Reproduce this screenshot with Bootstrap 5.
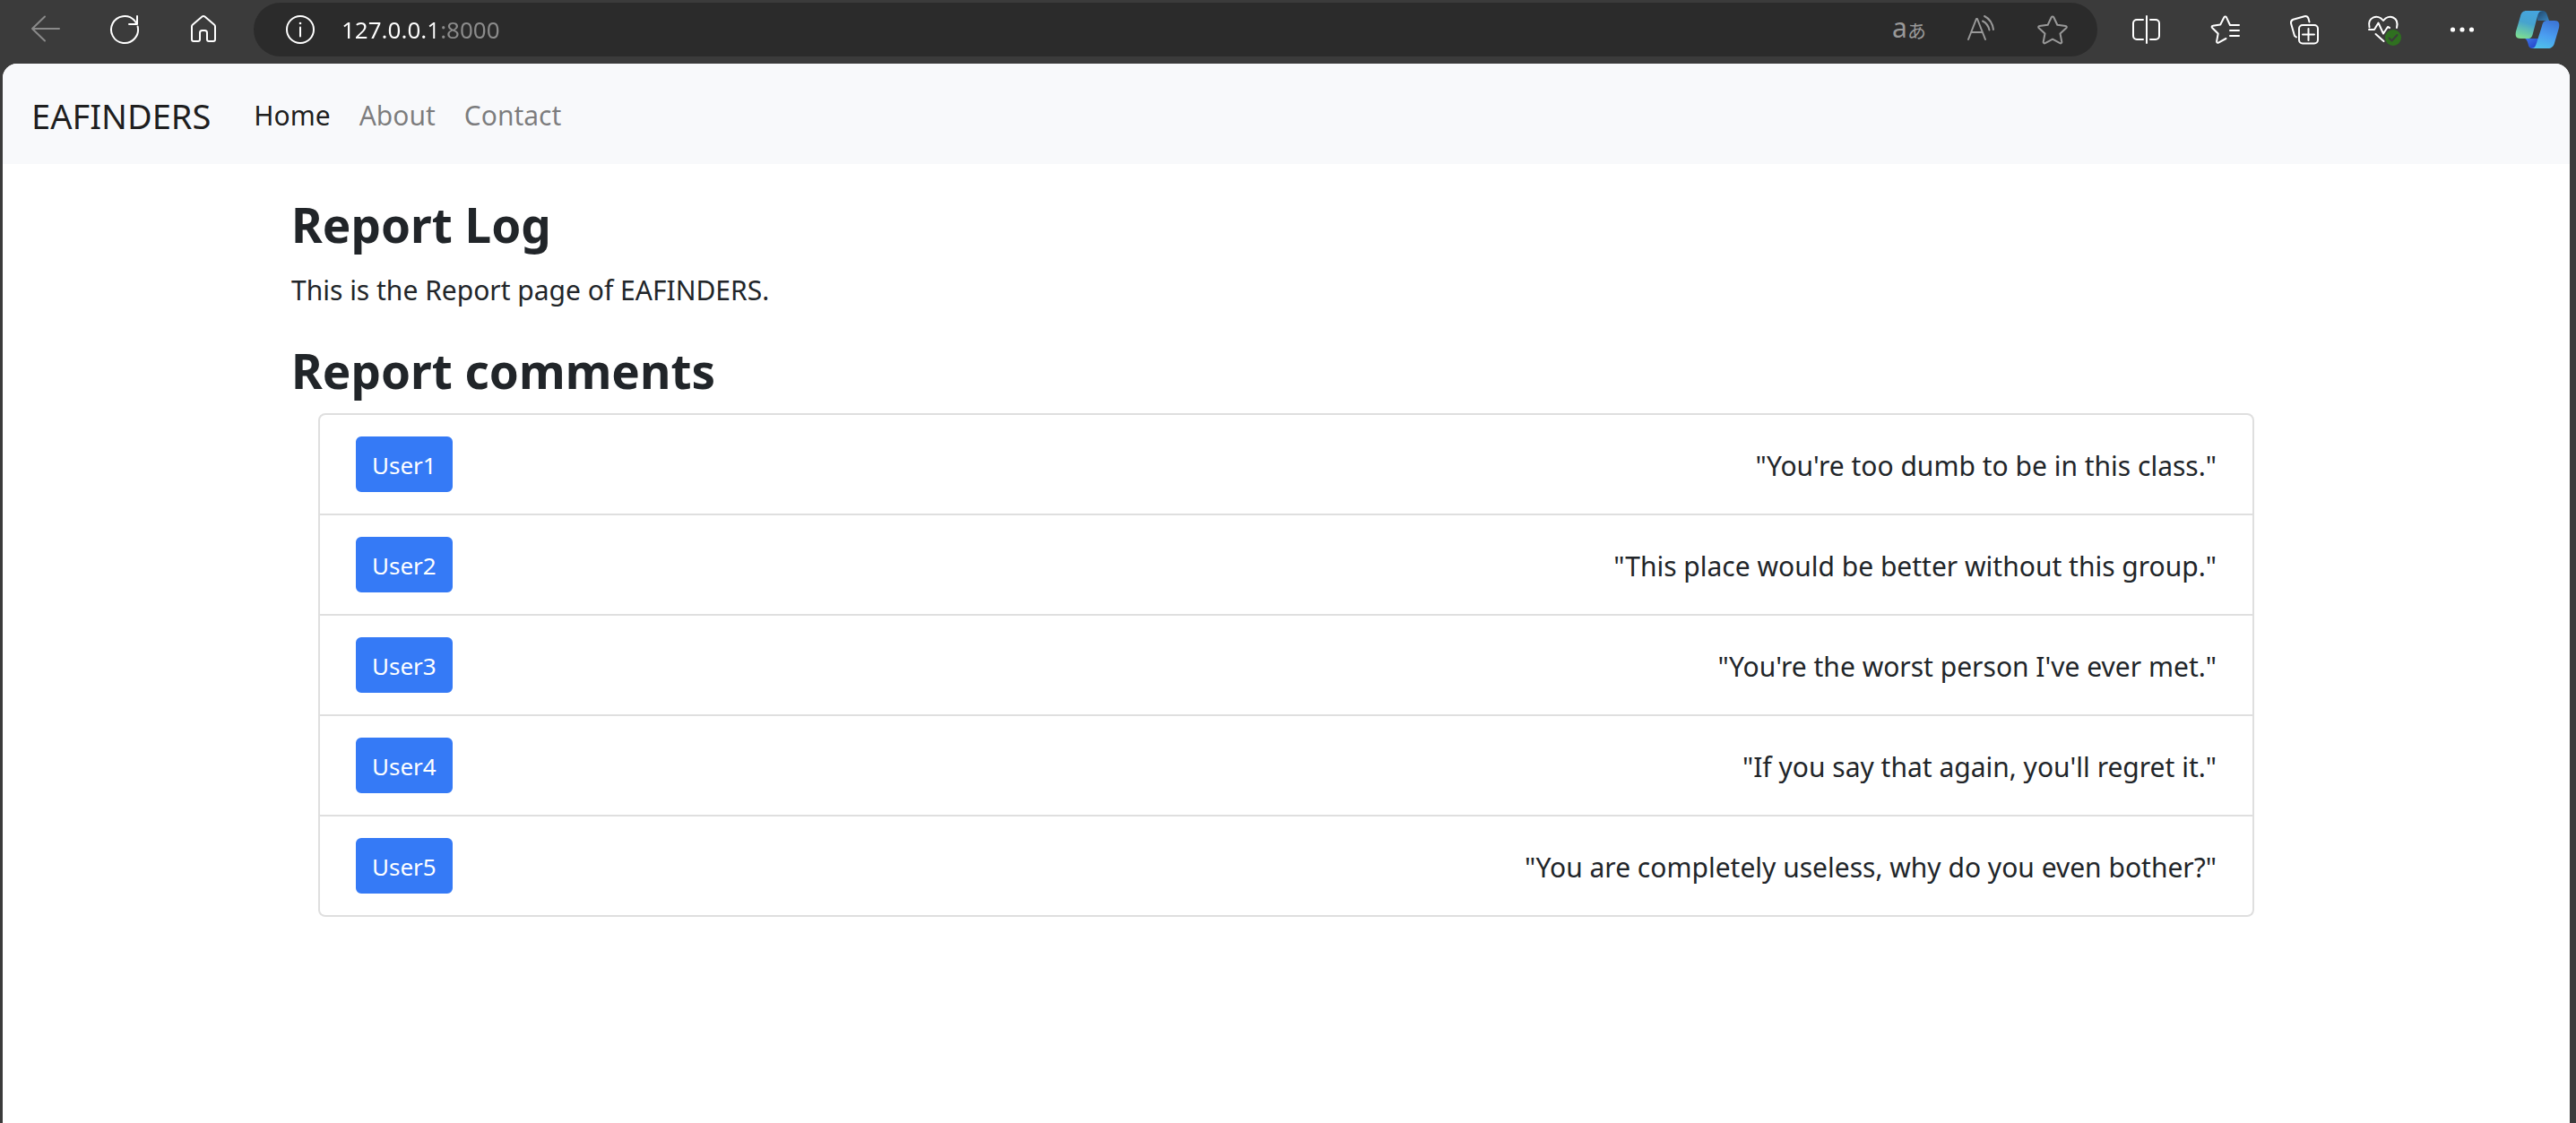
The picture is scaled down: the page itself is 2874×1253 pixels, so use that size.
<!DOCTYPE html>
<html lang="en">
<head>
<meta charset="utf-8">
<meta name="viewport" content="width=device-width, initial-scale=1">
<title>EAFINDERS - Report Log</title>
<link rel="stylesheet" href="https://cdn.jsdelivr.net/npm/bootstrap@5.3.0/dist/css/bootstrap.min.css">
<style>
  html { font-size: 32px; }
  body {
    font-family: "Noto Sans", "Noto Sans CJK JP", sans-serif;
    font-size: 30px;
    line-height: 48px;
    color: #212529;
    background: #3b3b3b;
  }

  /* Browser toolbar */
  .toolbar { height: 71px; padding: 3px 3px 8px 7px; }
  .tool {
    width: 88px; height: 60px; padding: 0; border: 0;
    display: flex; align-items: center; justify-content: center;
    background: transparent; color: #fff;
  }
  .tool svg, .address-tool svg { fill: none; stroke: currentColor; stroke-width: 2; stroke-linecap: round; stroke-linejoin: round; }
  .tool-off { color: #8a8a8a; }
  .tool-copilot { width: 80px; }
  .address {
    height: 60px; margin: 0 11px 0 12px; padding: 0 10px 0 12px;
    border-radius: 30px; background: #2b2b2b; min-width: 0;
  }
  .address-tool {
    width: 80px; height: 60px; padding: 0; border: 0; flex: none;
    display: flex; align-items: center; justify-content: center;
    background: transparent; color: #999;
  }
  .address-info { color: #fff; }
  .address-field {
    min-width: 0; height: 48px; padding: 0 0 0 6px; border: 0; outline: 0;
    font-size: 26px; color: #fff;
    background: linear-gradient(90deg, #fff 110px, #8c8c8c 110px);
    -webkit-background-clip: text; background-clip: text;
    -webkit-text-fill-color: transparent;
  }
  .translate-latin { font-size: 30px; line-height: 32px; padding-bottom: 4px; }
  .translate-kana { font-size: 21px; line-height: 32px; font-family: "Noto Sans CJK JP", sans-serif; }

  /* Web page */
  .page { margin: 0 7px 0 3px; border-radius: 16px 16px 0 0; background: #fff; overflow: hidden; }
  .site-nav { padding: 18px 32px 14px; background: #f8f9fb; }
  .site-nav .navbar-brand { font-size: 38px; line-height: 60px; padding: 10px 0; margin-right: 32px; color: rgba(0,0,0,.9); }
  .site-nav .nav-link { padding: 16px; color: rgba(0,0,0,.5); }
  .site-nav .nav-link.active { color: rgba(0,0,0,.9); }
  .content { max-width: 2280px; padding: 34px 30px 0; }
  .heading { font-size: 53px; line-height: 67px; font-weight: 700; margin-bottom: 16px; }
  .heading-comments { margin-bottom: 14px; }
  .comments { margin: 0 30px; --bs-list-group-border-width: 2px; --bs-list-group-border-color: #dfdfdf; --bs-list-group-border-radius: 8px; }
  .comments .list-group-item { padding: 24px 40px; color: #212529; }
  .comments .list-group-item span { padding-top: 4px; }
  .comments .btn {
    --bs-btn-bg: #357af6; --bs-btn-border-color: #357af6;
    padding: 9px 16px 7px; border-width: 2px; border-radius: 6px;
    font-size: 26px; line-height: 42px;
  }
</style>
</head>
<body class="d-flex flex-column min-vh-100">
<header class="toolbar d-flex align-items-center">
  <button type="button" class="tool tool-off" aria-label="Back" disabled>
    <svg width="36" height="36" viewBox="0 0 36 36"><path d="M33 17H3M17 3.500L3 17l14 13.500"/></svg>
  </button>
  <button type="button" class="tool" aria-label="Refresh">
    <svg width="36" height="36" viewBox="0 0 36 36"><path d="M32.600 14.500A15 15 0 1 1 29 7.800L31.500 11.500M32 3v9H23"/></svg>
  </button>
  <button type="button" class="tool" aria-label="Home">
    <svg width="36" height="36" viewBox="0 0 36 36"><path d="M5 14.500a2.500 2.500 0 0 1 1-2L16.500 3.600a2.300 2.300 0 0 1 3 0L30 12.500a2.500 2.500 0 0 1 1 2V29a2 2 0 0 1-2 2h-5a2 2 0 0 1-2-2v-7.500a2.500 2.500 0 0 0-2.500-2.500h-3a2.500 2.500 0 0 0-2.500 2.500V29a2 2 0 0 1-2 2H7a2 2 0 0 1-2-2z"/></svg>
  </button>

  <div class="address d-flex align-items-center flex-grow-1">
    <button type="button" class="address-tool address-info" aria-label="Site information">
      <svg width="36" height="36" viewBox="0 0 36 36"><circle cx="18" cy="18" r="15"/><path d="M18 15.500v10"/><circle cx="18" cy="11" r="1.300" fill="currentColor" stroke="none"/></svg>
    </button>
    <input class="address-field flex-grow-1" type="text" value="127.0.0.1:8000" aria-label="Address" spellcheck="false">
    <button type="button" class="address-tool" aria-label="Translate"><span class="translate-latin">a</span><span class="translate-kana">あ</span></button>
    <button type="button" class="address-tool" aria-label="Read aloud">
      <svg width="36" height="36" viewBox="0 0 36 36"><path d="M4 29L13 6h1l9 23M7.500 21h12M22 3c5 2.500 9 8 10 15M20 8.500c4 2 6.500 5.500 7.500 10"/></svg>
    </button>
    <button type="button" class="address-tool" aria-label="Add to favorites">
      <svg width="36" height="36" viewBox="0 0 36 36"><path d="M16.700 4.200a1.500 1.500 0 0 1 2.600 0l4 8.500 9.300 1.200a1.300 1.300 0 0 1 .7 2.300l-6.800 6.300 1.800 9.200a1.400 1.400 0 0 1-2 1.500L18 28.700l-8.300 4.500a1.400 1.400 0 0 1-2-1.500l1.800-9.200-6.800-6.300a1.300 1.300 0 0 1 .7-2.300l9.300-1.200z"/></svg>
    </button>
  </div>

  <button type="button" class="tool" aria-label="Split screen">
    <svg width="36" height="36" viewBox="0 0 36 36"><path d="M14 7H7a4 4 0 0 0-4 4v14a4 4 0 0 0 4 4h7M22 7h6a4 4 0 0 1 4 4v14a4 4 0 0 1-4 4h-6M18 3v30"/></svg>
  </button>
  <button type="button" class="tool" aria-label="Favorites">
    <svg width="36" height="36" viewBox="0 0 36 36"><path d="M33 13H23l-4-8.700a1.500 1.500 0 0 0-2.600 0l-4.200 8.200-8.400 1.200a1.300 1.300 0 0 0-.7 2.300l6.600 6.500-1.600 8.600a1.400 1.400 0 0 0 2 1.500L18.500 28M23 19h10M23 25h10"/></svg>
  </button>
  <button type="button" class="tool" aria-label="Collections">
    <svg width="36" height="36" viewBox="0 0 36 36"><rect x="12" y="13" width="21" height="20.500" rx="4"/><path d="M22.500 17v13M16 23.500h13M9 26.500l-2-1.500L3 11a4 4 0 0 1 2.500-4.200L18 3.200a4 4 0 0 1 4.500 2.500L23.500 9.500"/></svg>
  </button>
  <button type="button" class="tool" aria-label="Browser essentials">
    <svg width="40" height="40" viewBox="0 0 40 40"><path d="M4.500 17.500C2 6 14 2 20 10c6-8 18-4 15 8M4 20h6l4.500-7.500 5.500 12 5-7.500 2 1M11.500 25l9 8"/><circle cx="31" cy="29" r="9" fill="#2f7020" stroke="none"/><path d="M26.500 29.500l3 3 6-6.500" stroke="#3b3b3b"/></svg>
  </button>
  <button type="button" class="tool" aria-label="Settings and more">
    <svg width="36" height="36" viewBox="0 0 36 36"><g fill="currentColor" stroke="none"><circle cx="7.500" cy="18" r="2.600"/><circle cx="18" cy="18" r="2.600"/><circle cx="28.500" cy="18" r="2.600"/></g></svg>
  </button>
  <button type="button" class="tool tool-copilot" aria-label="Copilot">
    <svg width="50" height="44" viewBox="0 0 50 44">
      <defs>
        <linearGradient id="cp1" x1="0.600" y1="0" x2="0.300" y2="1"><stop offset="0" stop-color="#45a5df"/><stop offset=".45" stop-color="#46a3cf"/><stop offset="1" stop-color="#7bdc93"/></linearGradient>
        <linearGradient id="cp2" x1="0.600" y1="0" x2="0.300" y2="1"><stop offset="0" stop-color="#3d78d8"/><stop offset=".5" stop-color="#4a9cf0"/><stop offset="1" stop-color="#4fc0ea"/></linearGradient>
        <linearGradient id="cp3" x1="0" y1="0" x2="1" y2="1"><stop offset="0" stop-color="#1f4468"/><stop offset="1" stop-color="#3a84bc"/></linearGradient>
        <linearGradient id="cp4" x1="0" y1="0" x2="1" y2="1"><stop offset="0" stop-color="#3f78e8"/><stop offset="1" stop-color="#1f3bc4"/></linearGradient>
      </defs>
      <g stroke="none">
        <path fill="url(#cp3)" d="M24 1h6c4 0 5 2 6 5l2 6H25z"/>
        <path fill="url(#cp4)" d="M11 32h16l-5 11h-3c-4 0-4-4-5-7-1-2-1-3-3-4z"/>
        <path fill="url(#cp1)" d="M13 1h18c-4 0-5 3-6 6l-5 19c-1 4-2 6-6 6H6c-5 0-6-3-5-8L6 7c1-4 3-6 7-6z"/>
        <path fill="url(#cp2)" d="M36 12h8c5 0 6 3 5 8l-5 17c-1 4-4 6-7 6H18c4 0 5-3 6-6l6-19c1-4 2-6 6-6z"/>
      </g>
    </svg>
  </button>
</header>

<div class="page flex-grow-1">
  <nav class="navbar navbar-expand site-nav">
    <a class="navbar-brand" href="#">EAFINDERS</a>
    <ul class="navbar-nav">
      <li class="nav-item"><a class="nav-link active" aria-current="page" href="#">Home</a></li>
      <li class="nav-item"><a class="nav-link" href="#">About</a></li>
      <li class="nav-item"><a class="nav-link" href="#">Contact</a></li>
    </ul>
  </nav>

  <main class="content container-fluid">
    <h1 class="heading">Report Log</h1>
    <p class="mb-3">This is the Report page of EAFINDERS.</p>
    <h2 class="heading heading-comments">Report comments</h2>
    <ul class="list-group comments">
      <li class="list-group-item d-flex justify-content-between align-items-center"><button type="button" class="btn btn-primary">User1</button><span>"You're too dumb to be in this class."</span></li>
      <li class="list-group-item d-flex justify-content-between align-items-center"><button type="button" class="btn btn-primary">User2</button><span>"This place would be better without this group."</span></li>
      <li class="list-group-item d-flex justify-content-between align-items-center"><button type="button" class="btn btn-primary">User3</button><span>"You're the worst person I've ever met."</span></li>
      <li class="list-group-item d-flex justify-content-between align-items-center"><button type="button" class="btn btn-primary">User4</button><span>"If you say that again, you'll regret it."</span></li>
      <li class="list-group-item d-flex justify-content-between align-items-center"><button type="button" class="btn btn-primary">User5</button><span>"You are completely useless, why do you even bother?"</span></li>
    </ul>
  </main>
</div>
<script src="https://cdn.jsdelivr.net/npm/bootstrap@5.3.0/dist/js/bootstrap.bundle.min.js"></script>
</body>
</html>
